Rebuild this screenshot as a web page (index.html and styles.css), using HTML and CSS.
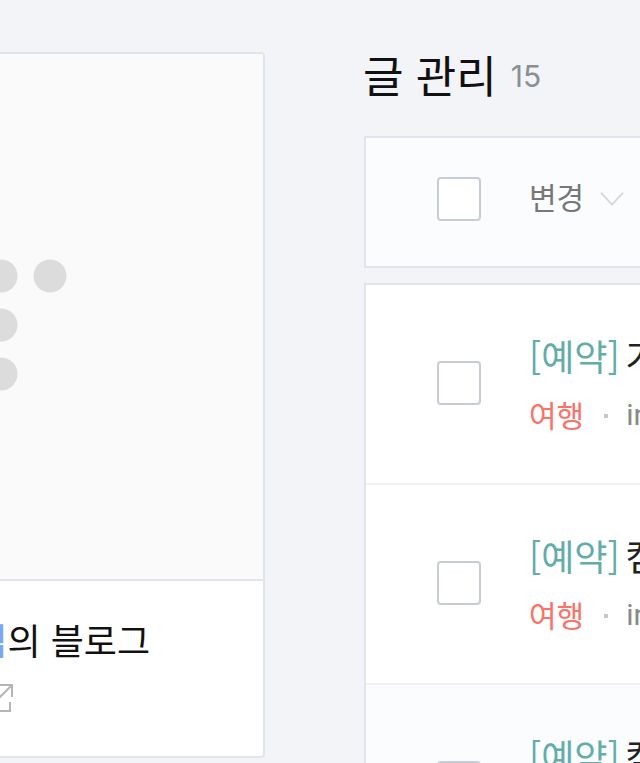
FILE: index.html
```html
<!DOCTYPE html>
<html lang="ko">
<head>
<meta charset="utf-8">
<meta name="viewport" content="width=device-width, initial-scale=1">
<title>글 관리</title>
<link rel="stylesheet" href="styles.css">
</head>
<body>
<div class="layout">
  <aside class="profile">
    <div class="profile-image">
      <svg class="logo" viewBox="0 0 132 132" aria-hidden="true">
        <circle cx="17" cy="17" r="16.5"/><circle cx="66" cy="17" r="16.5"/><circle cx="115" cy="17" r="16.5"/>
        <circle cx="66" cy="66" r="16.5"/><circle cx="66" cy="115" r="16.5"/>
      </svg>
    </div>
    <div class="profile-info">
      <h2 class="blog-name"><span class="owner">님</span>의 블로그</h2>
      <a class="blog-link" href="#" aria-label="블로그 열기">
        <svg viewBox="0 0 28 28" aria-hidden="true"><path d="M12 1H1v26h23v-9M13 1h13v12M26 1L13 14"/></svg>
      </a>
    </div>
  </aside>
  <main class="content">
    <h1 class="title">글 관리 <span class="count">15</span></h1>
    <div class="toolbar">
      <input class="check" type="checkbox" aria-label="전체 선택">
      <button class="change" type="button">변경
        <svg class="chevron" viewBox="0 0 26 16" aria-hidden="true"><path d="M1 1l12 13L25 1"/></svg>
      </button>
    </div>
    <ul class="posts">
      <li class="post">
        <input class="check" type="checkbox" aria-label="글 선택">
        <div class="post-text">
          <a class="post-title" href="#"><span class="reserved">[예약]</span>가</a>
          <p class="meta"><span class="category">여행</span><span class="dot"></span><span class="author">in</span></p>
        </div>
      </li>
      <li class="post">
        <input class="check" type="checkbox" aria-label="글 선택">
        <div class="post-text">
          <a class="post-title" href="#"><span class="reserved">[예약]</span>캠</a>
          <p class="meta"><span class="category">여행</span><span class="dot"></span><span class="author">in</span></p>
        </div>
      </li>
      <li class="post active">
        <input class="check" type="checkbox" aria-label="글 선택">
        <div class="post-text">
          <a class="post-title" href="#"><span class="reserved">[예약]</span>캠</a>
          <p class="meta"><span class="category">여행</span><span class="dot"></span><span class="author">in</span></p>
        </div>
      </li>
    </ul>
  </main>
</div>
</body>
</html>
```
FILE: styles.css
```css
* { box-sizing: border-box; }
html, body { height: 100%; }
body {
  margin: 0;
  overflow: hidden;
  background: #f2f4f7;
  color: #111;
  font-family: "Noto Sans CJK KR", sans-serif;
}
h1, h2, p, ul { margin: 0; padding: 0; font-weight: 400; }
ul { list-style: none; }
a { color: inherit; text-decoration: none; }

.layout {
  display: grid;
  grid-template-columns: 265px minmax(0, 1fr);
  column-gap: 98px;
  align-items: start;
  height: 100%;
  overflow: hidden;
  padding-top: 52px;
}

.profile {
  overflow: hidden;
  border: 2px solid #e1e4eb;
  border-left: 0;
  border-radius: 0 4px 4px 0;
  background: #fff;
}
.profile-image {
  display: flex;
  align-items: center;
  justify-content: flex-end;
  height: 527px;
  padding: 16px 196px 0 0;
  border-bottom: 2px solid #e1e4eb;
  background: #fafafa;
}
.logo { flex: none; width: 132px; height: 132px; fill: #dcdcdc; }
.profile-info {
  display: flex;
  flex-direction: column;
  align-items: flex-end;
  height: 175px;
  padding: 34px 113px 0 0;
}
.blog-name { font-size: 36px; line-height: 48px; white-space: nowrap; }
.owner { color: #7ba7f0; font-weight: 500; }
.blog-link { height: 28px; margin: 21px 136px 0 0; }
.blog-link svg { display: block; width: 28px; height: 28px; fill: none; stroke: #b5b5b5; stroke-width: 2; }

.title { display: flex; align-items: center; gap: 14px; height: 44px; font-size: 44px; line-height: 44px; white-space: nowrap; }
.count { padding-top: 4px; color: #8c8e92; font-family: Inter, sans-serif; font-size: 30px; }

.toolbar, .posts { margin-left: 1px; border: 2px solid #e1e4ee; border-right: 0; }
.toolbar {
  display: flex;
  align-items: center;
  gap: 48px;
  height: 132px;
  margin-top: 40px;
  padding: 0 0 6px 71px;
  background: #fbfcfe;
}
.check {
  appearance: none;
  flex: none;
  width: 44px;
  height: 44px;
  margin: 0;
  border: 2px solid #c8ccd5;
  border-radius: 4px;
  background: #fff;
}
.change {
  display: flex;
  align-items: flex-end;
  gap: 16px;
  padding: 0 0 6px;
  border: 0;
  background: none;
  color: #777;
  font: 30px/40px "Noto Sans CJK KR", sans-serif;
  white-space: nowrap;
}
.chevron { flex: none; width: 24px; height: 16px; margin-bottom: 9px; fill: none; stroke: #d5d7da; stroke-width: 2; }

.posts { margin-top: 15px; background: #fff; }
.post {
  display: flex;
  align-items: center;
  gap: 48px;
  height: 200px;
  padding: 0 0 2px 71px;
  border-bottom: 2px solid #eff1f4;
}
.post.active { background: #fbfcfe; }
.post-text { padding-top: 6px; white-space: nowrap; }
.post-title { display: block; color: #222; font-size: 36px; line-height: 56px; }
.reserved { margin-right: 6px; color: #62acab; }
.meta { display: flex; align-items: center; color: #888; font-size: 30px; line-height: 60px; }
.category { color: #fa7268; }
.author { padding-top: 2px; font-family: Roboto, sans-serif; }
.dot { width: 4px; height: 4px; margin: 4px 18px 0 20px; background: #c4c7cc; }
```
